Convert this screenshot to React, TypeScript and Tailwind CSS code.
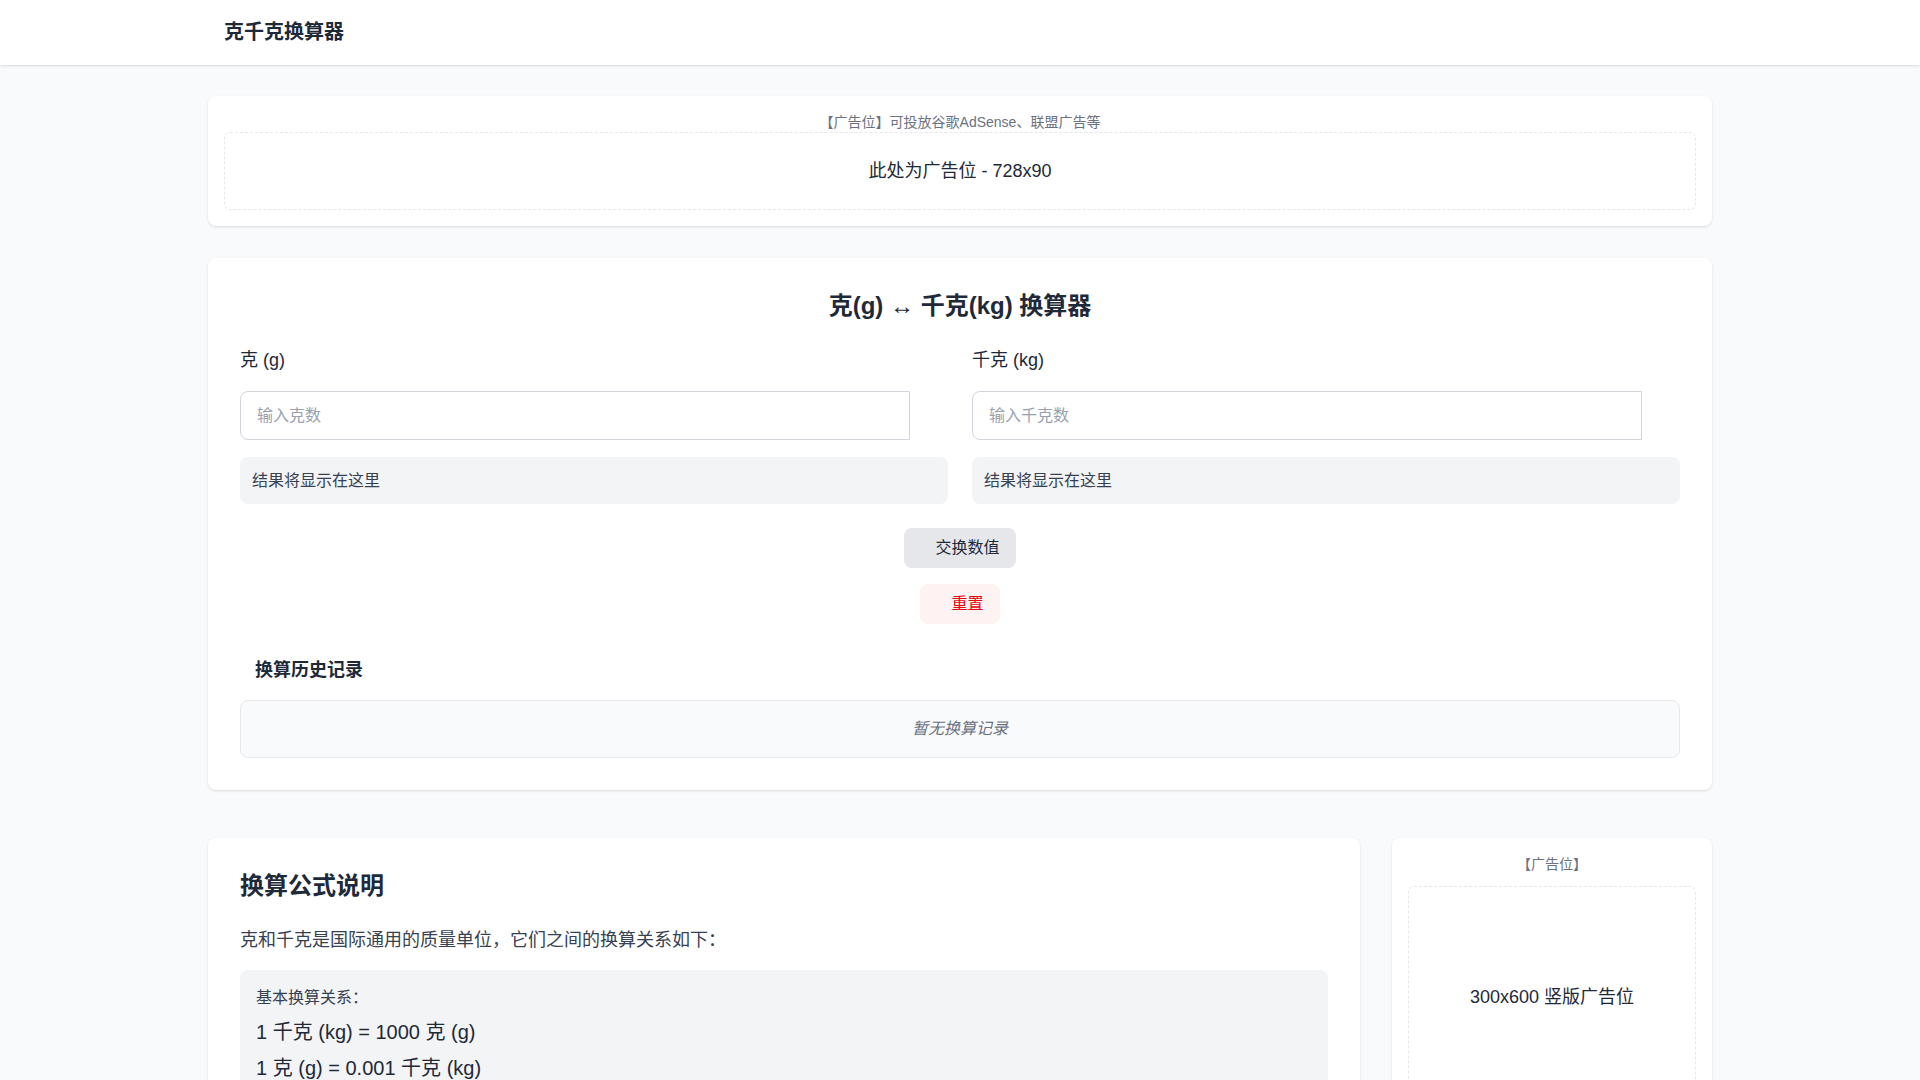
import React from 'react';

const font = 'font-["Liberation_Sans","Noto_Sans_CJK_SC",sans-serif]';

// placeholder for icon glyphs that never loaded in the original page
function IconGap() {
  return <span className="inline-block w-[7px] mr-2" />;
}

function UnitInput({ label, placeholder }: { label: string; placeholder: string }) {
  return (
    <div>
      <label className="block text-lg leading-7 text-gray-800 mb-[17px]">{label}</label>
      <div className="flex">
        <input
          className="flex-1 min-w-0 h-[49px] border border-gray-300 rounded-l-lg px-4 text-base text-gray-800 placeholder:text-gray-400 outline-none"
          placeholder={placeholder}
        />
        <span className="w-[38px]" />
      </div>
      <div className="mt-[17px] h-[47px] flex items-center px-3 bg-gray-100 rounded-lg text-base text-gray-700">
        结果将显示在这里
      </div>
    </div>
  );
}

export default function App() {
  return (
    <div className={`min-h-screen bg-gray-50 text-gray-800 ${font}`}>
      <header className="bg-white shadow-sm h-[65px]">
        <div className="max-w-[1536px] mx-auto px-8 h-full flex items-center">
          <h1 className="text-xl font-bold text-gray-800 -mt-px">克千克换算器</h1>
        </div>
      </header>

      <main className="max-w-[1536px] mx-auto px-4 pt-[31px] pb-10">
        {/* top banner ad */}
        <div className="bg-white rounded-lg shadow-sm p-4 mb-8">
          <div className="text-sm leading-5 text-gray-500 text-center">【广告位】可投放谷歌AdSense、联盟广告等</div>
          <div className="border border-dashed border-gray-200 rounded-md py-6 text-center text-lg leading-7 text-gray-800">
            此处为广告位 - 728x90
          </div>
        </div>

        {/* converter */}
        <div className="bg-white rounded-lg shadow-sm p-8 mb-[48px]">
          <h2 className="text-2xl leading-8 font-bold text-center mb-6">克(g) ↔ 千克(kg) 换算器</h2>
          <div className="grid grid-cols-2 gap-6">
            <UnitInput label="克 (g)" placeholder="输入克数" />
            <UnitInput label="千克 (kg)" placeholder="输入千克数" />
          </div>

          <div className="flex flex-col items-center">
            <button className="mt-6 h-10 px-4 rounded-lg bg-gray-200 text-base text-gray-800 flex items-center">
              <IconGap />
              交换数值
            </button>
            <button className="mt-4 h-10 px-4 rounded-lg bg-red-50 text-base text-red-600 flex items-center">
              <IconGap />
              重置
            </button>
          </div>

          <h3 className="mt-8 mb-4 text-lg leading-7 font-bold flex items-center">
            <IconGap />
            换算历史记录
          </h3>
          <div className="border border-gray-200 bg-gray-50 rounded-lg p-4 text-center italic text-gray-500 text-base leading-6">
            暂无换算记录
          </div>
        </div>

        {/* explanation + side ad */}
        <div className="flex gap-8 items-start">
          <div className="flex-1 bg-white rounded-lg shadow-sm p-8">
            <h2 className="text-2xl leading-8 font-bold mb-6">换算公式说明</h2>
            <p className="text-lg leading-7 text-gray-700 mb-4">克和千克是国际通用的质量单位，它们之间的换算关系如下：</p>
            <div className="bg-gray-100 rounded-lg p-4">
              <p className="text-base leading-6 text-gray-700 mb-2">基本换算关系：</p>
              <p className="text-xl leading-7 text-gray-800 mb-2">1 千克 (kg) = 1000 克 (g)</p>
              <p className="text-xl leading-7 text-gray-800">1 克 (g) = 0.001 千克 (kg)</p>
            </div>
          </div>
          <aside className="w-80 bg-white rounded-lg shadow-sm p-4">
            <div className="text-sm leading-5 text-gray-500 text-center mb-3">【广告位】</div>
            <div className="border border-dashed border-gray-200 rounded-md h-[600px] pt-24 text-center text-lg leading-7 text-gray-800">
              300x600 竖版广告位
            </div>
          </aside>
        </div>
      </main>
    </div>
  );
}
